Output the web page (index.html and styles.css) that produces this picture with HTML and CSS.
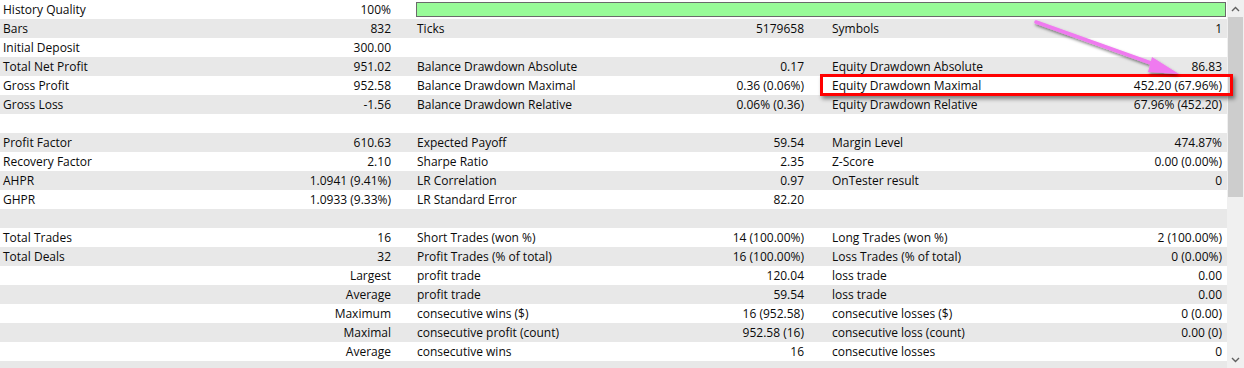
FILE: index.html
```html
<!DOCTYPE html>
<html>
<head>
<meta charset="utf-8">
<link rel="stylesheet" href="styles.css">
</head>
<body>
<div class="page">
  <div class="report">
    <div class="row">
      <div class="cell c1"><span class="lbl">History Quality</span><span class="val">100%</span></div>
      <div class="quality"><div class="qfill"></div></div>
    </div>
    <div class="row">
      <div class="cell c1"><span class="lbl">Bars</span><span class="val">832</span></div>
      <div class="cell c2"><span class="lbl">Ticks</span><span class="val">5179658</span></div>
      <div class="cell c3"><span class="lbl">Symbols</span><span class="val">1</span></div>
    </div>
    <div class="row">
      <div class="cell c1"><span class="lbl">Initial Deposit</span><span class="val">300.00</span></div>
      <div class="cell c2"></div>
      <div class="cell c3"></div>
    </div>
    <div class="row">
      <div class="cell c1"><span class="lbl">Total Net Profit</span><span class="val">951.02</span></div>
      <div class="cell c2"><span class="lbl">Balance Drawdown Absolute</span><span class="val">0.17</span></div>
      <div class="cell c3"><span class="lbl">Equity Drawdown Absolute</span><span class="val">86.83</span></div>
    </div>
    <div class="row">
      <div class="cell c1"><span class="lbl">Gross Profit</span><span class="val">952.58</span></div>
      <div class="cell c2"><span class="lbl">Balance Drawdown Maximal</span><span class="val">0.36 (0.06%)</span></div>
      <div class="cell c3"><span class="lbl">Equity Drawdown Maximal</span><span class="val">452.20 (67.96%)</span></div>
    </div>
    <div class="row">
      <div class="cell c1"><span class="lbl">Gross Loss</span><span class="val">-1.56</span></div>
      <div class="cell c2"><span class="lbl">Balance Drawdown Relative</span><span class="val">0.06% (0.36)</span></div>
      <div class="cell c3"><span class="lbl">Equity Drawdown Relative</span><span class="val">67.96% (452.20)</span></div>
    </div>
    <div class="row"></div>
    <div class="row">
      <div class="cell c1"><span class="lbl">Profit Factor</span><span class="val">610.63</span></div>
      <div class="cell c2"><span class="lbl">Expected Payoff</span><span class="val">59.54</span></div>
      <div class="cell c3"><span class="lbl">Margin Level</span><span class="val">474.87%</span></div>
    </div>
    <div class="row">
      <div class="cell c1"><span class="lbl">Recovery Factor</span><span class="val">2.10</span></div>
      <div class="cell c2"><span class="lbl">Sharpe Ratio</span><span class="val">2.35</span></div>
      <div class="cell c3"><span class="lbl">Z-Score</span><span class="val">0.00 (0.00%)</span></div>
    </div>
    <div class="row">
      <div class="cell c1"><span class="lbl">AHPR</span><span class="val">1.0941 (9.41%)</span></div>
      <div class="cell c2"><span class="lbl">LR Correlation</span><span class="val">0.97</span></div>
      <div class="cell c3"><span class="lbl">OnTester result</span><span class="val">0</span></div>
    </div>
    <div class="row">
      <div class="cell c1"><span class="lbl">GHPR</span><span class="val">1.0933 (9.33%)</span></div>
      <div class="cell c2"><span class="lbl">LR Standard Error</span><span class="val">82.20</span></div>
      <div class="cell c3"></div>
    </div>
    <div class="row"></div>
    <div class="row">
      <div class="cell c1"><span class="lbl">Total Trades</span><span class="val">16</span></div>
      <div class="cell c2"><span class="lbl">Short Trades (won %)</span><span class="val">14 (100.00%)</span></div>
      <div class="cell c3"><span class="lbl">Long Trades (won %)</span><span class="val">2 (100.00%)</span></div>
    </div>
    <div class="row">
      <div class="cell c1"><span class="lbl">Total Deals</span><span class="val">32</span></div>
      <div class="cell c2"><span class="lbl">Profit Trades (% of total)</span><span class="val">16 (100.00%)</span></div>
      <div class="cell c3"><span class="lbl">Loss Trades (% of total)</span><span class="val">0 (0.00%)</span></div>
    </div>
    <div class="row">
      <div class="cell c1"><span class="lbl"></span><span class="val">Largest</span></div>
      <div class="cell c2"><span class="lbl">profit trade</span><span class="val">120.04</span></div>
      <div class="cell c3"><span class="lbl">loss trade</span><span class="val">0.00</span></div>
    </div>
    <div class="row">
      <div class="cell c1"><span class="lbl"></span><span class="val">Average</span></div>
      <div class="cell c2"><span class="lbl">profit trade</span><span class="val">59.54</span></div>
      <div class="cell c3"><span class="lbl">loss trade</span><span class="val">0.00</span></div>
    </div>
    <div class="row">
      <div class="cell c1"><span class="lbl"></span><span class="val">Maximum</span></div>
      <div class="cell c2"><span class="lbl">consecutive wins ($)</span><span class="val">16 (952.58)</span></div>
      <div class="cell c3"><span class="lbl">consecutive losses ($)</span><span class="val">0 (0.00)</span></div>
    </div>
    <div class="row">
      <div class="cell c1"><span class="lbl"></span><span class="val">Maximal</span></div>
      <div class="cell c2"><span class="lbl">consecutive profit (count)</span><span class="val">952.58 (16)</span></div>
      <div class="cell c3"><span class="lbl">consecutive loss (count)</span><span class="val">0.00 (0)</span></div>
    </div>
    <div class="row">
      <div class="cell c1"><span class="lbl"></span><span class="val">Average</span></div>
      <div class="cell c2"><span class="lbl">consecutive wins</span><span class="val">16</span></div>
      <div class="cell c3"><span class="lbl">consecutive losses</span><span class="val">0</span></div>
    </div>
    <div class="row"></div>
  </div>
  <div class="scrollbar">
    <div class="sbtn">
      <svg width="9" height="6" viewBox="0 0 9 6"><path d="M1 5 L4.5 1.5 L8 5" fill="none" stroke="#606060" stroke-width="1.4"/></svg>
    </div>
    <div class="track"><div class="thumb"></div></div>
    <div class="sbtn">
      <svg width="9" height="6" viewBox="0 0 9 6"><path d="M1 1 L4.5 4.5 L8 1" fill="none" stroke="#606060" stroke-width="1.4"/></svg>
    </div>
  </div>
  <div class="highlight"></div>
  <svg class="pointer" width="1244" height="368" viewBox="0 0 1244 368">
    <defs>
      <filter id="sh" x="-20%" y="-20%" width="140%" height="160%">
        <feDropShadow dx="1" dy="2" stdDeviation="1.5" flood-color="#000" flood-opacity="0.5"/>
      </filter>
    </defs>
    <g filter="url(#sh)">
      <line x1="1036" y1="22" x2="1162" y2="67" stroke="#f07af0" stroke-width="3.6" stroke-linecap="round"/>
      <polygon points="1179,74 1152,57 1148,72" fill="#f07af0"/>
    </g>
  </svg>
</div>
</body>
</html>
```
FILE: styles.css
```css
html, body {
  margin: 0;
  padding: 0;
  background: #ffffff;
}
body {
  font-family: "Open Sans", "Noto Sans", sans-serif;
  font-size: 12px;
  color: #0a0a0a;
}
.page {
  position: relative;
  width: 1244px;
  height: 368px;
  overflow: hidden;
  display: flex;
}
.report {
  width: 1227px;
  display: flex;
  flex-direction: column;
}
.row {
  height: 19px;
  flex: none;
  display: grid;
  grid-template-columns: 414px 414px 1fr;
  line-height: 19px;
}
.row:nth-child(even) {
  background: #e8e8e8;
}
.cell {
  display: flex;
  justify-content: space-between;
  white-space: nowrap;
}
.c1 { padding: 0 23px 0 3px; }
.c2 { padding: 0 24px 0 3px; }
.c3 { padding: 0 5px 0 4px; }
.val { text-align: right; }
.quality {
  grid-column: 2 / 4;
  margin: 2px 1px 2px 2px;
  border: 1px solid #6a6a6a;
  background: #98fb98;
}
.scrollbar {
  width: 17px;
  height: 368px;
  background: #f0f0f0;
  display: flex;
  flex-direction: column;
}
.sbtn {
  height: 17px;
  flex: none;
  display: flex;
  align-items: center;
  justify-content: center;
}
.track {
  flex: 1;
  padding: 0 1px;
}
.thumb {
  height: 180px;
  background: #cdcdcd;
}
.highlight {
  position: absolute;
  left: 820px;
  top: 74px;
  width: 407px;
  height: 16px;
  border: 3px solid #ff0000;
  box-shadow: 2px 3px 4px rgba(0, 0, 0, 0.45);
}
.pointer {
  position: absolute;
  left: 0;
  top: 0;
  pointer-events: none;
}
```
